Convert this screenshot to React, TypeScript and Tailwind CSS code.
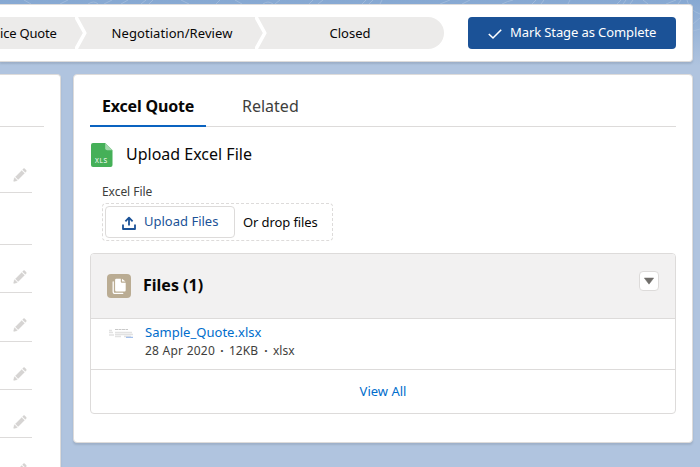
import React from "react";

const rows = [
  { h: "h-[66px]", pencil: "top-[41px]" },
  { h: "h-[52px]", pencil: null },
  { h: "h-[48px]", pencil: "top-[25px]" },
  { h: "h-[49px]", pencil: "top-[25px]" },
  { h: "h-[48px]", pencil: "top-[25px]" },
  { h: "h-[48px]", pencil: "top-[25px]" },
  { h: "h-[48px]", pencil: "top-[25px]" },
];

function Pencil({ className }: { className: string }) {
  return (
    <svg className={className} width="14" height="14" viewBox="0 0 52 52" fill="#d6d4d3" stroke="#d6d4d3" strokeWidth="1">
      <path d="M9.5 33.4l8.9 8.9c.4.4 1 .4 1.4 0L42 20c.4-.4.4-1 0-1.4l-8.8-8.8c-.4-.4-1-.4-1.4 0L9.5 32.1c-.4.4-.4 1 0 1.3zM36.1 5.7c-.4.4-.4 1 0 1.4l8.8 8.8c.4.4 1 .4 1.4 0l2.5-2.5c1.6-1.5 1.6-3.9 0-5.5l-4.7-4.7c-1.6-1.6-4.1-1.6-5.7 0l-2.3 2.5zM2.1 48.2c-.2 1 .7 1.9 1.7 1.7l10.9-2.6c.4-.1.7-.3.9-.5l.2-.2c.2-.2.3-.9-.1-1.3l-9-9c-.4-.4-1.1-.3-1.3-.1l-.2.2c-.3.3-.4.6-.5.9L2.1 48.2z" />
    </svg>
  );
}

function Chevron() {
  return (
    <svg className="block shrink-0" width="13" height="32" viewBox="0 0 13 32">
      <path d="M0 0H13V32H0z" fill="#ecebea" />
      <path d="M0.7 -0.5L9.8 16L0.7 32.5" fill="none" stroke="#fff" strokeWidth="3.6" strokeLinejoin="round" />
    </svg>
  );
}

function Backdrop() {
  return (
    <svg className="absolute inset-0 -z-10" width="700" height="110" viewBox="0 0 700 110" fill="none" stroke="#a9c1df" strokeWidth="1" opacity=".7">
      <path d="M24 0l7 4M60 4l8-4M88 4Q94 0 98 4M104 4l8-4M121 4l7-4M141 4l5-4M149 4l4-4M181 0l8 4M216 4l4-4M235 0l7 4M263 4q5-4 10 0M280 0l-5 4M309 4l4-4M318 4l5-4M362 4l4-4M369 4l4-4M382 0l-2 4M440 4l10-4M462 4l8-4M502 4q6-3 11-4M532 4l4-4M541 4l3-4M568 4l2-4M617 4l4-4M623 4l3-4M630 4l3-4M643 0l5 4M666 4l10-4M678 4l3-4M687 0q2 10 13 14M693 24l7-6M693 31l7-2" />
    </svg>
  );
}

export default function App() {
  return (
    <div className="relative isolate h-[467px] w-[700px] overflow-hidden bg-[#b0c4df] bg-[linear-gradient(#86a8d2_0px,#b0c4df_66px)] font-['Noto_Sans','Open_Sans',sans-serif] text-[13px] text-[#080707]">
      <Backdrop />
      <header className="mt-1 flex h-[58px] w-[693px] items-center rounded-r-[4px] border border-l-0 border-[#dddbda] bg-white shadow-[0_2px_2px_rgba(0,0,0,0.1)]">
        <div className="flex h-8 w-[444px] items-center overflow-hidden rounded-r-full bg-[#ecebea]">
          <div className="w-[75px] pt-[2px] whitespace-nowrap"><span className="tracking-[-0.2px]">ice Quote</span></div>
          <Chevron />
          <div className="w-[167px] pt-[2px] pl-[1px] text-center whitespace-nowrap"><span className="tracking-[0.07px]">Negotiation/Review</span></div>
          <Chevron />
          <div className="flex-1 pt-[2px] pr-[12px] text-center"><span>Closed</span></div>
        </div>
        <button className="ml-6 flex h-8 w-[208px] items-center rounded-[4px] bg-[#1b5297] pl-5 text-white">
          <svg width="14" height="14" viewBox="0 0 14 14" fill="none" stroke="#fff" strokeWidth="1.6" className="mt-[2px]">
            <path d="M.8 7L5 11L13.2 2.8" />
          </svg>
          <span className="ml-2 tracking-[-0.1px] whitespace-nowrap">Mark Stage as Complete</span>
        </button>
      </header>

      <div className="mt-3 flex items-start gap-3">
        <aside className="h-[420px] w-[61px] rounded-tr-[4px] border border-b-0 border-l-0 border-[#dddbda] bg-white shadow-[0_2px_2px_rgba(0,0,0,0.1)]">
          <div className="h-[52px] w-11 border-b border-[#dddbda]" />
          {rows.map((row, i) => (
            <div key={i} className={`relative w-8 border-b border-[#dddbda] ${row.h}`}>
              {row.pencil && <Pencil className={`absolute left-[13px] ${row.pencil}`} />}
            </div>
          ))}
        </aside>

        <main className="h-[369px] w-[620px] rounded-[4px] border border-[#dddbda] bg-white pl-4 pr-4 shadow-[0_2px_2px_rgba(0,0,0,0.1)]">
          <nav className="flex h-[52px] border-b border-[#dddbda] text-[16px]">
            <div className="h-[52px] w-[116px] border-b-2 border-[#0a63c0] pt-[19px] pl-3 leading-6 font-bold whitespace-nowrap"><span className="tracking-[-0.18px]">Excel Quote</span></div>
            <div className="pt-[19px] pl-9 leading-6 text-[#3e3e3c]"><span>Related</span></div>
          </nav>

          <div className="mt-4 flex h-6 items-center pl-[1px]">
            <svg width="22" height="24" viewBox="0 0 22 24">
              <path d="M2 0H14.2L21.5 7.2V22a2 2 0 0 1-2 2H2a2 2 0 0 1-2-2V2a2 2 0 0 1 2-2z" fill="#45b058" />
              <path d="M14.2 0V5.2a2 2 0 0 0 2 2H21.5z" fill="#a2d8ac" />
              <text x="4" y="20.3" fontSize="6.6" textLength="12.2" fill="#fff" fontFamily="Noto Sans, sans-serif">XLS</text>
            </svg>
            <h2 className="mb-[2px] ml-[13px] text-[16px] whitespace-nowrap"><span>Upload Excel File</span></h2>
          </div>

          <div className="mt-4 h-5 pl-3 text-[12px] leading-[18px] text-[#3e3e3c]"><span className="tracking-[-0.05px]">Excel File</span></div>
          <div className="ml-3 flex h-[38px] w-[231px] items-center rounded-[4px] border border-dashed border-[#dddbda] pl-[2px]">
            <button className="flex h-8 w-[130px] items-center rounded-[4px] border border-[#dddbda] bg-white pl-4 text-[#1b5297]">
              <svg width="14" height="14" viewBox="0 0 14 14" fill="none" stroke="#1b5297" strokeWidth="1.8" className="mt-[2px]">
                <path d="M7 9.5V2M3.4 5.3L7 1.7L10.6 5.3M1 8.6V13H13V8.6" strokeLinejoin="round" />
              </svg>
              <span className="ml-2 whitespace-nowrap">Upload Files</span>
            </button>
            <span className="mt-[2px] ml-2 tracking-[-0.1px] whitespace-nowrap">Or drop files</span>
          </div>

          <section className="mt-3 h-[161px] w-[586px] overflow-hidden rounded-[4px] border border-[#dddbda] bg-white">
            <div className="flex h-[65px] items-center border-b border-[#dddbda] bg-[#f2f1f1] pl-4 pr-4">
              <svg width="24" height="24" viewBox="0 0 24 24">
                <rect width="24" height="24" rx="4" fill="#baac93" />
                <path d="M9.3 4.8h4.5v2.9a1 1 0 0 0 1 1h3.9v7.6a1.2 1.2 0 0 1-1.2 1.2H9.3a1.2 1.2 0 0 1-1.2-1.2V6a1.2 1.2 0 0 1 1.2-1.2z" fill="#fff" />
                <path d="M15 4.8v2.7h3.5z" fill="#fff" />
                <path d="M6.2 7.8v10.2a1.3 1.3 0 0 0 1.3 1.3h8.3" fill="none" stroke="#fff" strokeWidth="1.3" strokeLinecap="round" />
              </svg>
              <h3 className="mb-[2px] ml-3 text-[16px] font-bold whitespace-nowrap"><span>Files (1)</span></h3>
              <button className="mb-[10px] ml-auto flex h-5 w-5 items-center justify-center rounded-[4px] border border-[#dddbda] bg-white">
                <svg width="10" height="8" viewBox="0 0 10 8"><path d="M.3 1H9.7L5 7.2z" fill="#706e6b" stroke="#706e6b" strokeWidth=".5" strokeLinejoin="round" /></svg>
              </button>
            </div>
            <div className="flex h-[51px] border-b border-[#dddbda] pl-[18px]">
              <svg width="25" height="12" viewBox="0 0 25 12" className="mt-[8px]">
                <path d="M0 3.5H3M0 5.5H4M0 8H5M6 5.5H23M6 7.5H24M6 9.5H12M15 9.5H22" stroke="#e2e2e2" strokeWidth="1.6" />
                <path d="M6 2.5H19" stroke="#c9c9c9" strokeWidth="1.2" strokeDasharray="3 .5" />
                <path d="M17 10.3H24" stroke="#a3c0ec" strokeWidth="1.2" />
              </svg>
              <div className="ml-[11px] pt-[4px] whitespace-nowrap">
                <div className="h-[19px] leading-[19px] text-[#006dcc]"><span className="tracking-[0.03px]">Sample_Quote.xlsx</span></div>
                <div className="flex text-[12px] leading-[18px] text-[#3e3e3c]"><span className="w-[70px] tracking-[0.24px]">28 Apr 2020</span><span className="w-[14px] text-center font-bold">·</span><span className="w-[30px]">12KB</span><span className="w-[14px] text-center font-bold">·</span><span>xlsx</span></div>
              </div>
            </div>
            <div className="flex h-[43px] items-center justify-center text-[#006dcc]"><span>View All</span></div>
          </section>
        </main>
      </div>
    </div>
  );
}
